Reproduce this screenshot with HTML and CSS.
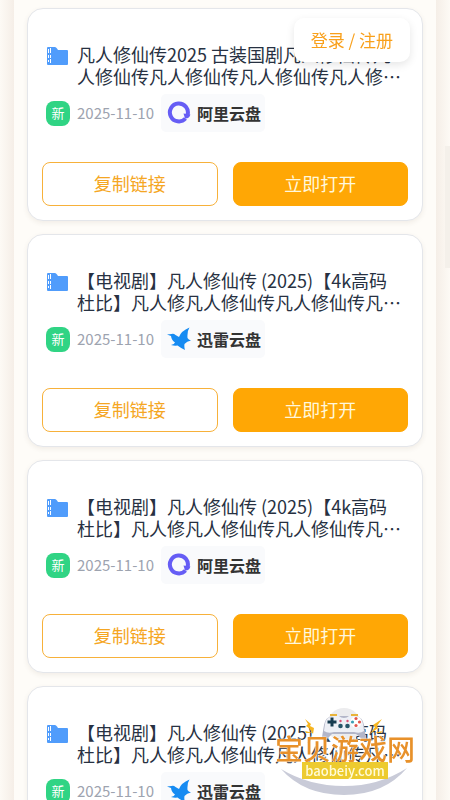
FILE: index.html
```html
<!DOCTYPE html>
<html lang="zh-CN">
<head>
<meta charset="utf-8">
<meta name="viewport" content="width=device-width, initial-scale=1">
<title>凡人修仙传</title>
<link rel="stylesheet" href="styles.css">
</head>
<body>
<svg class="defs" aria-hidden="true">
  <symbol id="folder" viewBox="0 0 21 18">
    <path fill="#509cfb" d="M0 1Q0 0 1 0H8Q9 0 10 1.500L11 3H20Q21 3 21 4V17Q21 18 20 18H1Q0 18 0 17Z"/>
    <path fill="#fff" d="M1 2h1v4H1zM3 1h1v5H3zM1 8h1v3H1zM3 8h1v3H3zM3 12h1v4H3zM1 13h1v2H1z"/>
  </symbol>
  <symbol id="ali" viewBox="0 0 24 24">
    <path fill="none" stroke="#665df5" stroke-width="4" d="M18.500 17.500A9 9 0 1 1 20.500 14"/>
    <path fill="#665df5" d="M16.500 12.500L23.400 13.500Q22.400 17.800 18 17.500Z"/>
  </symbol>
  <symbol id="bird" viewBox="0 0 24 24">
    <path fill="#168bf2" d="M0 7.500L4.500 7Q6.500 6 8.500 8L12 10Q14 4 22.500 0.500Q20 4 20.500 11Q21.500 13 24.500 13.500Q20 14.500 17.500 17Q17 20 18 23Q13 20.500 10.500 18.500Q7.500 19 4 18Q7.500 17 8 15.500Q4.500 13 4 9Z"/>
  </symbol>
</svg>

<a class="login" href="#">登录 / 注册</a>

<main class="list">
  <article class="card">
    <div class="head">
      <svg class="folder"><use href="#folder"/></svg>
      <h2 class="title">凡人修仙传2025 古装国剧凡人修仙传凡人修仙传凡人修仙传凡人修仙传凡人修仙传凡人修仙传</h2>
    </div>
    <div class="meta">
      <span class="new">新</span><time class="date">2025-11-10</time>
      <span class="source"><svg class="logo"><use href="#ali"/></svg>阿里云盘</span>
    </div>
    <div class="actions"><button class="btn" type="button">复制链接</button><button class="btn primary" type="button">立即打开</button></div>
  </article>

  <article class="card">
    <div class="head">
      <svg class="folder"><use href="#folder"/></svg>
      <h2 class="title">【电视剧】凡人修仙传 (2025)【4k高码杜比】凡人修凡人修仙传凡人修仙传凡人修仙传凡人修仙传</h2>
    </div>
    <div class="meta">
      <span class="new">新</span><time class="date">2025-11-10</time>
      <span class="source"><svg class="logo"><use href="#bird"/></svg>迅雷云盘</span>
    </div>
    <div class="actions"><button class="btn" type="button">复制链接</button><button class="btn primary" type="button">立即打开</button></div>
  </article>

  <article class="card">
    <div class="head">
      <svg class="folder"><use href="#folder"/></svg>
      <h2 class="title">【电视剧】凡人修仙传 (2025)【4k高码杜比】凡人修凡人修仙传凡人修仙传凡人修仙传凡人修仙传</h2>
    </div>
    <div class="meta">
      <span class="new">新</span><time class="date">2025-11-10</time>
      <span class="source"><svg class="logo"><use href="#ali"/></svg>阿里云盘</span>
    </div>
    <div class="actions"><button class="btn" type="button">复制链接</button><button class="btn primary" type="button">立即打开</button></div>
  </article>

  <article class="card">
    <div class="head">
      <svg class="folder"><use href="#folder"/></svg>
      <h2 class="title">【电视剧】凡人修仙传 (2025)【4k高码杜比】凡人修凡人修仙传凡人修仙传凡人修仙传凡人修仙传</h2>
    </div>
    <div class="meta">
      <span class="new">新</span><time class="date">2025-11-10</time>
      <span class="source"><svg class="logo"><use href="#bird"/></svg>迅雷云盘</span>
    </div>
    <div class="actions"><button class="btn" type="button">复制链接</button><button class="btn primary" type="button">立即打开</button></div>
  </article>
</main>

<div class="scrollbar"></div>

<div class="watermark">
  <svg class="art" viewBox="0 0 140 90" aria-hidden="true">
    <circle cx="69" cy="20" r="17" fill="#ececee"/>
    <path fill="#c9cbd8" d="M6 64Q34 81 69 81Q104 81 132 63Q109 90 69 90Q29 90 6 64Z"/>
    <path fill="#b3b6c8" d="M49 20Q50 12 58 11H80Q88 12 89 20L91 33Q90 37 87 34L81 29H57L51 35Q47 37 47 32Z"/>
    <path fill="#eef0f6" d="M50 19Q51 12 58 11H64Q66 13 69 13T74 11H80Q87 12 88 19L89 26Q85 29 79 27H59Q53 29 49 26Z"/>
    <path stroke="#e9b43a" stroke-width="2" d="M55 10h7M76 10h7"/>
    <path stroke="#173c50" stroke-width="3" d="M52.500 17h9M57 12.500v9"/>
    <g fill="#28566a"><circle cx="65.500" cy="21" r="2.300"/><circle cx="72.500" cy="21" r="2.300"/></g>
    <g fill="#dc5274"><circle cx="65.500" cy="16" r="1.200"/><circle cx="72.500" cy="16" r="1.200"/></g>
    <circle cx="81" cy="17" r="5.500" fill="#fff"/>
    <circle cx="81" cy="13.500" r="1.600" fill="#e2564e"/><circle cx="84.500" cy="17" r="1.600" fill="#e2564e"/>
    <circle cx="77.500" cy="17" r="1.600" fill="#3c9fb5"/><circle cx="81" cy="20.500" r="1.600" fill="#e2564e"/>
    <path fill="#f7b51f" d="M30 14L36 19L35 21L39 23L38 29L34 23L31 21L33 19ZM107 14L98 20L100 22L95 29L103 23L102 21ZM30 26L38 28L31 28ZM107 26L100 28L106 28Z"/>
  </svg>
  <span class="brand">宝贝游戏网</span>
  <span class="site">baobeiy.com</span>
</div>
</body>
</html>
```

FILE: styles.css
```css
* {
  box-sizing: border-box;
}

body {
  margin: 0;
  height: 100vh;
  overflow: hidden;
  position: relative;
  padding: 0 14px;
  background: linear-gradient(90deg, #fdfaf5 0, #f5eee7 14px, #f5eee7 calc(100% - 14px), #fdfaf5 100%);
  color: #273142;
  font-family: "Noto Sans CJK SC", sans-serif;
}

.defs {
  position: absolute;
  width: 0;
  height: 0;
}

.list {
  display: flex;
  flex-direction: column;
  gap: 13px;
  padding: 8px 13px;
  background: #fefcf8;
}

.card {
  padding: 34px 14px 14px;
  border: 1px solid #e4e6ea;
  border-radius: 16px;
  background: #fff;
  box-shadow: 0 2px 5px rgba(90, 70, 40, 0.08);
}

.head {
  display: flex;
  gap: 9px;
  padding: 0 5px;
}

.folder {
  flex: none;
  width: 21px;
  height: 18px;
  margin-top: 4px;
}

.title {
  display: -webkit-box;
  -webkit-box-orient: vertical;
  -webkit-line-clamp: 2;
  flex: 1;
  margin: 0;
  overflow: hidden;
  font-size: 18px;
  font-weight: 400;
  line-height: 22px;
}

.meta {
  display: flex;
  align-items: center;
  gap: 7px;
  margin-top: 7px;
  padding: 0 4px;
}

.new {
  width: 24px;
  height: 25px;
  border-radius: 8px;
  background: #30d484;
  color: #fff;
  font-size: 13px;
  line-height: 24px;
  text-align: center;
}

.date {
  color: #9da3af;
  font-size: 15px;
  line-height: 24px;
}

.source {
  display: flex;
  align-items: center;
  gap: 6px;
  height: 38px;
  padding: 0 4px 0 6px;
  border-radius: 5px;
  background: #f9fafc;
  color: #333;
  font-size: 16px;
  font-weight: 700;
  line-height: 24px;
}

.logo {
  width: 24px;
  height: 24px;
}

.actions {
  display: grid;
  grid-template-columns: 1fr 1fr;
  gap: 15px;
  margin-top: 30px;
}

.btn {
  height: 44px;
  padding: 0 0 2px;
  border: 1px solid #f7b13a;
  border-radius: 8px;
  background: #fff;
  color: #f5a623;
  font: 400 18px/24px "Noto Sans CJK SC", sans-serif;
}

.primary {
  border-color: #ffa705;
  background: #ffa705;
  color: #fff8dc;
}

.login {
  position: fixed;
  top: 18px;
  right: 40px;
  padding: 10px 17px;
  border-radius: 10px;
  background: #fff;
  box-shadow: 0 3px 8px rgba(0, 0, 0, 0.1);
  color: #f9a01b;
  font-size: 17px;
  line-height: 24px;
  text-decoration: none;
}

.scrollbar {
  position: fixed;
  top: 146px;
  right: 0;
  width: 5px;
  height: 122px;
  background: #f4f0ea;
}

.watermark {
  position: fixed;
  right: 35px;
  bottom: 5px;
  display: flex;
  flex-direction: column;
  align-items: center;
  width: 140px;
  height: 90px;
  padding-top: 29px;
}

.art {
  position: absolute;
  inset: 0;
  width: 140px;
  height: 90px;
}

.brand {
  position: relative;
  color: #e8912a;
  font-size: 28px;
  font-weight: 500;
  line-height: 28px;
  text-shadow: 0 0 1px #fff, 0 0 2px #fff;
  white-space: nowrap;
}

.site {
  position: relative;
  width: 86px;
  background: #edcb2f;
  color: #fffbd8;
  font-size: 13px;
  font-weight: 500;
  line-height: 17px;
  text-align: center;
}
```
